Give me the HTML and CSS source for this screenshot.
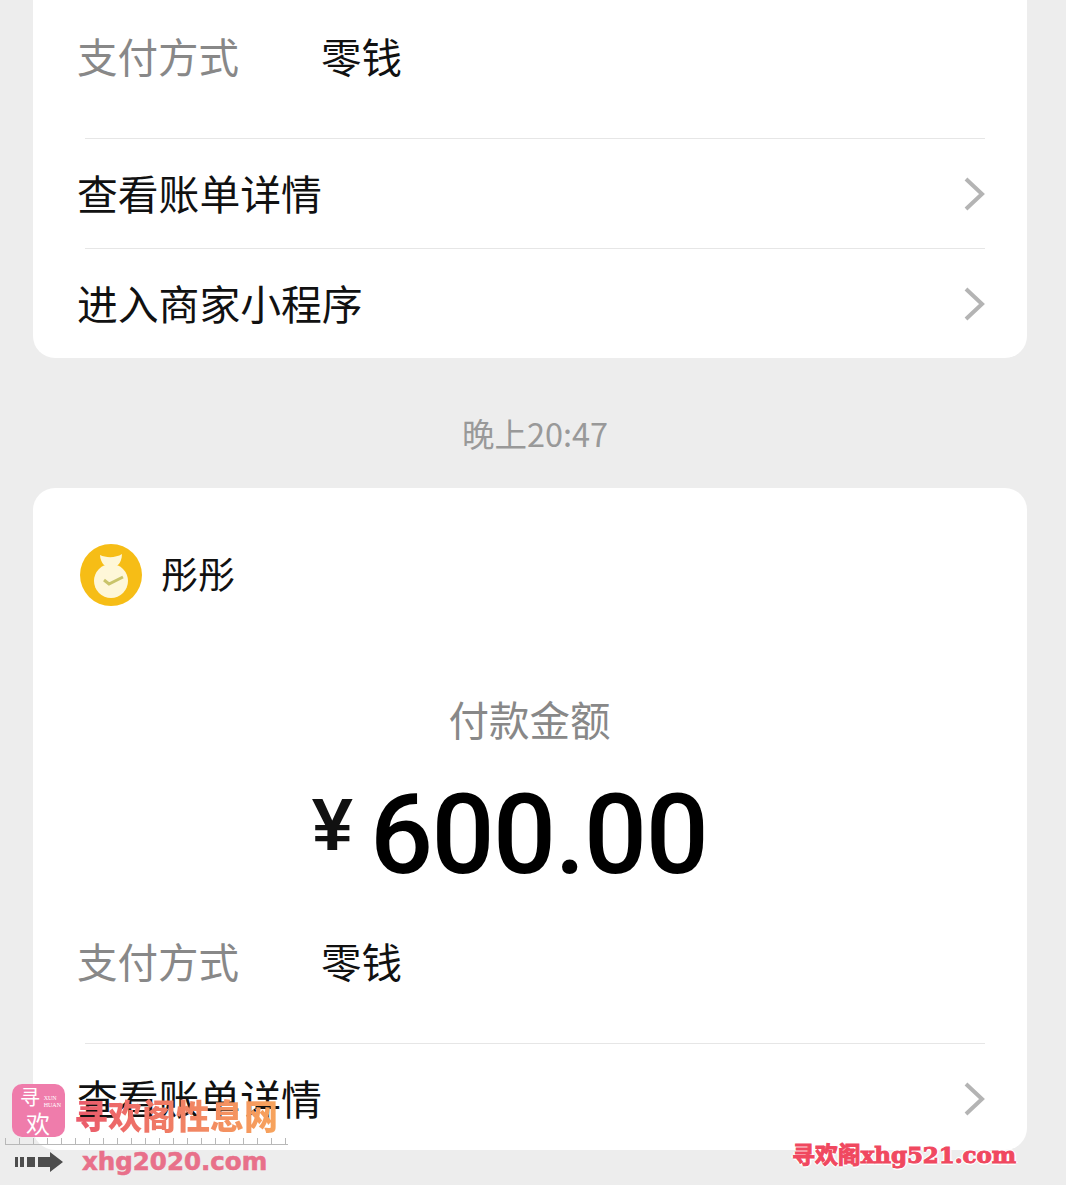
FILE: index.html
```html
<!DOCTYPE html>
<html>
<head>
  <title>微信支付</title>
  <link rel="stylesheet" href="styles.css">
</head>
<body>
  <div class="page">
    <div class="card card-first">
      <div class="pay-row">
        <span class="pay-label">支付方式</span>
        <span class="pay-value">零钱</span>
      </div>
      <div class="link-row">
        <span>查看账单详情</span>
        <svg class="chevron" viewBox="0 0 22 36"><path d="M3 3 L19 18 L3 33"/></svg>
      </div>
      <div class="link-row">
        <span>进入商家小程序</span>
        <svg class="chevron" viewBox="0 0 22 36"><path d="M3 3 L19 18 L3 33"/></svg>
      </div>
    </div>

    <div class="time">晚上20:47</div>

    <div class="card">
      <div class="head">
        <svg class="avatar" viewBox="0 0 62 62">
          <circle cx="31" cy="31" r="31" fill="#f6bd16"/>
          <path d="M20 11 C26 14 36 14 42 10 C42 15 40 19 38 21 L24 21 C22 19 20 15 20 11 Z" fill="#fef7d8"/>
          <circle cx="31" cy="37" r="17" fill="#fef7d8"/>
          <path d="M24 36 L29 40 L43 33" fill="none" stroke="#c9c46a" stroke-width="3"/>
        </svg>
        <span class="name">彤彤</span>
      </div>
      <div class="amount-label">付款金额</div>
      <div class="amount"><span class="yen">¥</span><span class="digits">600.00</span></div>
      <div class="pay-row">
        <span class="pay-label">支付方式</span>
        <span class="pay-value">零钱</span>
      </div>
      <div class="link-row">
        <span>查看账单详情</span>
        <svg class="chevron" viewBox="0 0 22 36"><path d="M3 3 L19 18 L3 33"/></svg>
      </div>
    </div>
  </div>

  <div class="mark-left">
    <div class="mark-top">
      <div class="mark-logo">
        <span class="logo-xun">寻</span>
        <span class="logo-huan">欢</span>
        <span class="logo-small">XUN<br>HUAN</span>
      </div>
      <div class="mark-title">寻欢阁性息网</div>
    </div>
    <div class="mark-rule"></div>
    <div class="mark-bottom">
      <svg class="mark-arrow" viewBox="0 0 48 20">
        <path d="M0 5h3v10h-3z M5 5h4v10h-4z M12 5h8v10h-8z M23 5h12v-5l13 10l-13 10v-5h-12z" fill="#4d4d4d"/>
      </svg>
      <span class="mark-url">xhg2020.com</span>
    </div>
  </div>
  <div class="mark-right">寻欢阁xhg521.com</div>
</body>
</html>
```

FILE: styles.css
```css
html, body {
  margin: 0;
  height: 1185px;
  overflow: hidden;
}

body {
  position: relative;
  background-color: #ededed;
  font-family: "Noto Sans CJK SC", "Liberation Sans", sans-serif;
  color: #111;
}

.page {
  margin-top: -22px;
  padding: 0 39px 0 33px;
}

.card {
  background-color: #fff;
  border-radius: 22px;
  padding: 0 42px 0 44px;
  height: 662px;
}

.card-first {
  height: 380px;
  border-radius: 0 0 22px 22px;
}

.pay-row {
  display: flex;
  align-items: center;
  height: 160px;
  padding-bottom: 5px;
  box-sizing: border-box;
  font-size: 40.5px;
}

.pay-label {
  color: #888;
  width: 244px;
}

.link-row {
  display: flex;
  align-items: center;
  justify-content: space-between;
  height: 109px;
  border-top: 1px solid #e6e6e6;
  margin-left: 8px;
  font-size: 40.8px;
}

.link-row span {
  margin-left: -8px;
  margin-top: -3px;
}

.chevron {
  width: 22px;
  height: 36px;
  fill: none;
  stroke: #b4b4b4;
  stroke-width: 4;
}

.time {
  height: 130px;
  box-sizing: border-box;
  padding-top: 51px;
  text-align: center;
  font-size: 32.5px;
  line-height: 48px;
  color: #999;
  padding-left: 10px;
}

.head {
  display: flex;
  align-items: center;
  gap: 19px;
  padding-top: 56px;
  margin-left: 3px;
}

.avatar {
  width: 62px;
  height: 62px;
}

.name {
  font-size: 37px;
  margin-top: -4px;
}

.amount-label {
  margin-top: 82px;
  text-align: center;
  font-size: 40.5px;
  line-height: 62px;
  color: #888;
  padding-right: 3px;
}

.amount {
  display: flex;
  align-items: center;
  justify-content: center;
  height: 120px;
  margin-top: 13px;
  padding-right: 43px;
  gap: 17px;
}

.yen {
  font-family: "Liberation Sans", sans-serif;
  font-size: 74px;
  font-weight: bold;
  margin-top: 2px;
}

.digits {
  font-family: Roboto, sans-serif;
  font-size: 111px;
  line-height: 120px;
  font-weight: 500;
  letter-spacing: -1.5px;
  color: #000;
  margin-top: 24px;
}

.mark-left {
  position: absolute;
  left: 5px;
  top: 1084px;
  width: 283px;
}

.mark-top {
  display: flex;
  align-items: flex-end;
  padding-left: 7px;
}

.mark-logo {
  position: relative;
  width: 53px;
  height: 53px;
  border-radius: 10px;
  background-color: #ef7cab;
  color: #fff;
}

.logo-xun {
  position: absolute;
  left: 8px;
  top: 2px;
  font-size: 20px;
  line-height: 22px;
}

.logo-huan {
  position: absolute;
  left: 14px;
  top: 26px;
  font-size: 24px;
  line-height: 26px;
}

.logo-small {
  position: absolute;
  right: 4px;
  top: 11px;
  font-family: "Liberation Serif", serif;
  font-size: 6px;
  line-height: 7px;
  color: #fff;
}

.mark-title {
  margin-left: 9px;
  margin-bottom: -1px;
  font-size: 34px;
  line-height: 46px;
  font-weight: 900;
  background: linear-gradient(90deg, #ea5a6c, #f7a45c);
  -webkit-background-clip: text;
  background-clip: text;
  color: transparent;
}

.mark-rule {
  height: 6px;
  margin-top: 1px;
  border-bottom: 1px solid #b8b8b8;
  background-image: linear-gradient(90deg, #b8b8b8 1px, transparent 1px);
  background-size: 14px 6px;
}

.mark-bottom {
  display: flex;
  align-items: center;
  padding-left: 10px;
  margin-top: 3px;
  gap: 19px;
}

.mark-arrow {
  width: 48px;
  height: 20px;
}

.mark-url {
  font-family: "DejaVu Sans", sans-serif;
  font-size: 24.5px;
  line-height: 28px;
  font-weight: bold;
  color: #e8708a;
  -webkit-text-stroke: 0.6px #e8708a;
}

.mark-right {
  position: absolute;
  left: 792px;
  top: 1138px;
  font-family: "DejaVu Serif", "Noto Sans CJK SC", serif;
  font-size: 23px;
  line-height: 34px;
  font-weight: bold;
  letter-spacing: -0.1px;
  color: #f0485f;
  -webkit-text-stroke: 1px #f0485f;
  text-shadow: 2px 0 #fff, -2px 0 #fff, 0 2px #fff, 0 -2px #fff;
}
```
